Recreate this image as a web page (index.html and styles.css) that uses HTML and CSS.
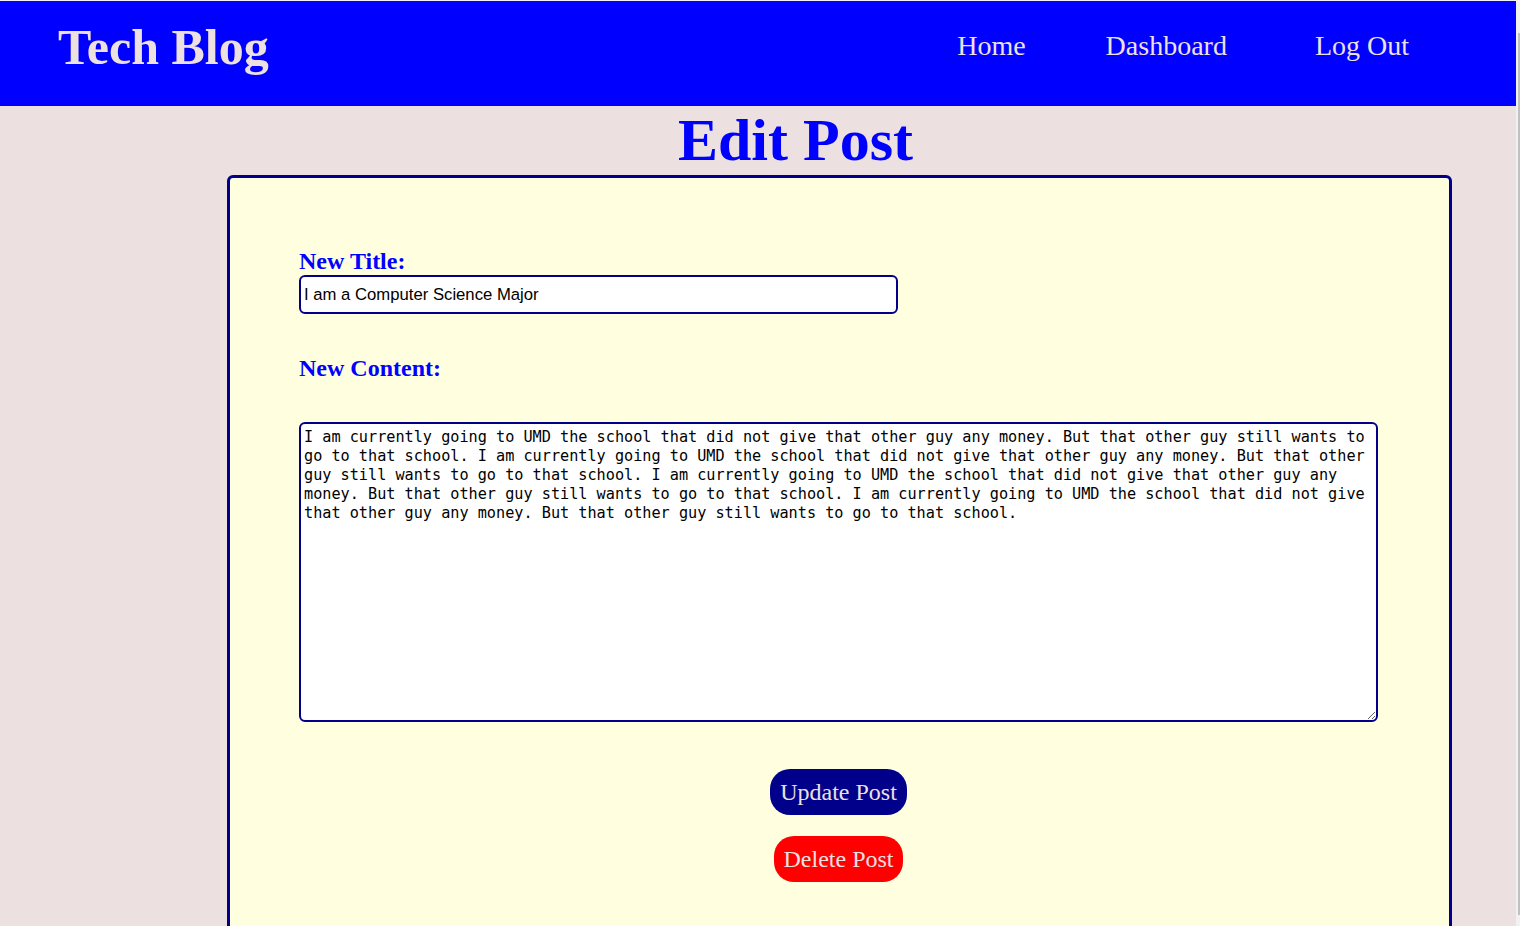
FILE: index.html
```html
<!DOCTYPE html>
<html lang="en">
<head>
<meta charset="utf-8">
<title>Tech Blog - Edit Post</title>
<link rel="stylesheet" href="styles.css">
</head>
<body>
<div class="page">
  <header class="site-header">
    <h1 class="brand">Tech Blog</h1>
    <nav class="nav">
      <a class="nav-link" href="#">Home</a>
      <a class="nav-link nav-dash" href="#">Dashboard</a>
      <a class="nav-link nav-out" href="#">Log Out</a>
    </nav>
  </header>
  <main class="main">
    <h2 class="page-title">Edit Post</h2>
    <section class="card">
      <form class="edit-form">
        <label class="field-label" for="title">New Title:</label>
        <input class="title-input" id="title" type="text" value="I am a Computer Science Major">
        <label class="field-label content-label" for="content">New Content:</label>
        <textarea class="content-input" id="content">I am currently going to UMD the school that did not give that other guy any money. But that other guy still wants to go to that school. I am currently going to UMD the school that did not give that other guy any money. But that other guy still wants to go to that school. I am currently going to UMD the school that did not give that other guy any money. But that other guy still wants to go to that school. I am currently going to UMD the school that did not give that other guy any money. But that other guy still wants to go to that school.</textarea>
        <div class="actions">
          <button type="button" class="btn btn-update">Update Post</button>
          <button type="button" class="btn btn-delete">Delete Post</button>
        </div>
      </form>
    </section>
  </main>
</div>
<div class="scroll-thumb"></div>
</body>
</html>
```

FILE: styles.css
```css
html {
  background: #f1f1f1;
  overflow: hidden;
}

body {
  margin: 1px 4px 0 0;
  background: #ece0e1;
  font-family: "Liberation Serif", "Times New Roman", serif;
  min-height: 925px;
}

.page {
  display: flex;
  flex-direction: column;
}

.site-header {
  height: 105px;
  background: #0000ff;
  display: flex;
  justify-content: space-between;
  align-items: flex-start;
  padding: 0 107px 0 58px;
  box-sizing: border-box;
}

.brand {
  margin: 21px 0 0;
  font-size: 50px;
  line-height: 50px;
  font-weight: bold;
  color: #ece0e1;
}

.nav {
  display: flex;
  margin-top: 31px;
}

.nav-link {
  font-size: 28px;
  line-height: 28px;
  color: #ece0e1;
  text-decoration: none;
}

.nav-dash {
  margin-left: 80px;
}

.nav-out {
  margin-left: 88px;
}

.main {
  display: flex;
  flex-direction: column;
}

.page-title {
  margin: 4px 0 5px;
  padding-left: 75px;
  text-align: center;
  font-size: 60px;
  line-height: 60px;
  font-weight: bold;
  color: #0000ff;
}

.card {
  margin-left: 227px;
  width: 1225px;
  box-sizing: border-box;
  background: #ffffe0;
  border: 3px solid #00008b;
  border-radius: 6px;
  padding: 71px 71px 80px 69px;
}

.edit-form {
  display: flex;
  flex-direction: column;
  align-items: flex-start;
}

.field-label {
  display: block;
  font-size: 24px;
  line-height: 24px;
  font-weight: bold;
  color: #0000ff;
  margin-bottom: 2px;
}

.content-label {
  margin-top: 42px;
  margin-bottom: 42px;
}

.title-input {
  width: 599px;
  height: 39px;
  box-sizing: border-box;
  border: 2px solid #00008b;
  border-radius: 6px;
  padding: 0 3px;
  margin: 0;
  background: #ffffff;
  font-family: "Liberation Sans", Arial, sans-serif;
  font-size: 16.7px;
  color: #000000;
  outline: none;
}

.content-input {
  width: 1079px;
  height: 300px;
  box-sizing: border-box;
  border: 2px solid #00008b;
  border-radius: 6px;
  padding: 4px 2px 2px 3px;
  margin: 0;
  background: #ffffff;
  font-family: "DejaVu Sans Mono", monospace;
  font-size: 15.2px;
  line-height: 19px;
  color: #000000;
  outline: none;
}

.actions {
  align-self: stretch;
  display: flex;
  flex-direction: column;
  align-items: center;
  gap: 21px;
  margin-top: 47px;
}

.btn {
  border: none;
  border-radius: 20px;
  padding: 9px 10px;
  font-family: "Liberation Serif", "Times New Roman", serif;
  font-size: 24px;
  line-height: 28px;
  color: #ece0e1;
  cursor: pointer;
}

.btn-update {
  background: #00008b;
}

.btn-delete {
  background: #ff0000;
}

.scroll-thumb {
  position: fixed;
  right: 0;
  top: 33px;
  width: 2px;
  height: 882px;
  background: #c1c1c1;
}
```
